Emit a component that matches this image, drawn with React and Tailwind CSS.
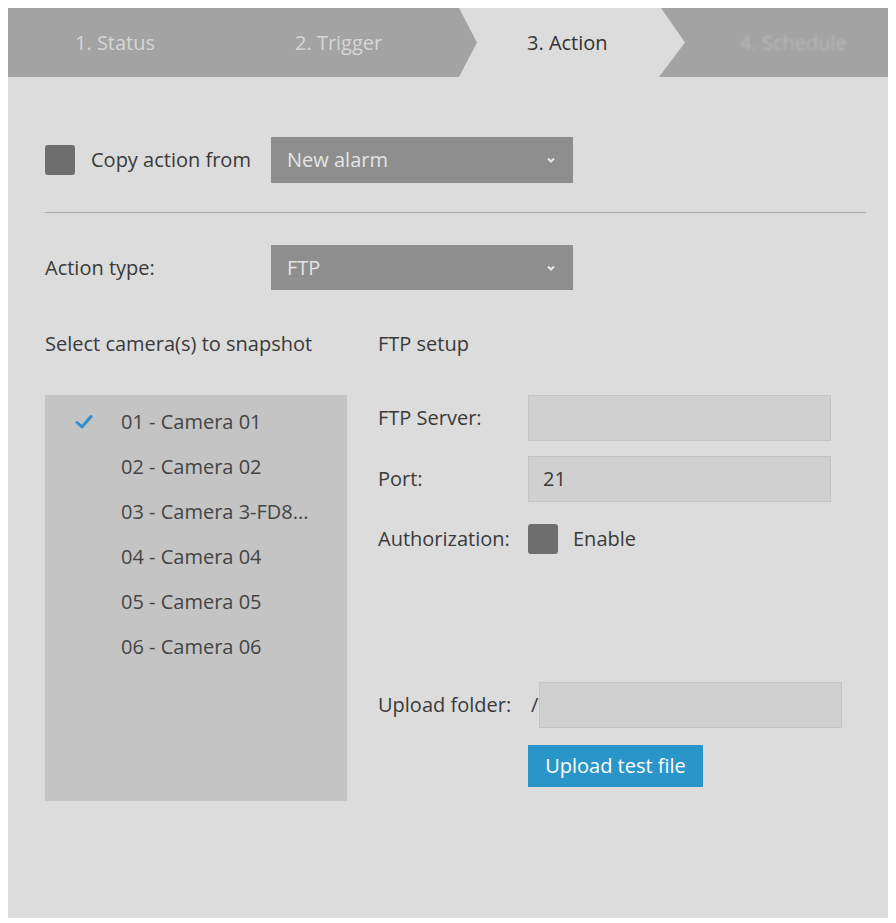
export default function App() {
  const cams = ["01 - Camera 01","02 - Camera 02","03 - Camera 3-FD8...","04 - Camera 04","05 - Camera 05","06 - Camera 06"];
  const Chev = () => (
    <svg width="12" height="12" viewBox="0 0 12 12"><path d="M3 4.5 L6 7.5 L9 4.5" fill="none" stroke="#e8e8e8" strokeWidth="2"/></svg>
  );
  return (
    <div className="w-[896px] h-[923px] bg-white pl-[8px] pr-[8px] pt-[8px]" style={{fontFamily:'"Open Sans", sans-serif'}}>
      <div className="w-[880px] h-[910px] bg-[#dcdcdc] text-[#3a3a3a] text-[20px]">
        <div className="relative h-[69px] bg-[#a3a3a3]">
          <div className="absolute top-0 left-[451px] h-[69px] w-[234px] bg-[#dcdcdc] [clip-path:polygon(0_0,202px_0,226px_50%,200px_100%,0_100%,18px_50%)]"></div>
          <div className="relative flex h-full items-center">
            <div className="absolute left-[67px] text-[#d6d6d6]">1. Status</div>
            <div className="absolute left-[287px] text-[#d6d6d6]">2. Trigger</div>
            <div className="absolute left-[519px] text-[#333]">3. Action</div>
            <div className="absolute left-[732px] text-[#b8b8b8] blur-[1px]">4. Schedule</div>
          </div>
        </div>
        <div className="pl-[37px] pr-[14px]">
          <div className="flex items-center mt-[60px] h-[46px]">
            <div className="w-[30px] h-[30px] rounded-[3px] bg-[#6e6e6e]"></div>
            <span className="ml-[16px] w-[180px] whitespace-nowrap">Copy action from</span>
            <div className="w-[302px] h-[46px] bg-[#8e8e8e] flex items-center justify-between pl-[16px] pr-[16px] text-[#e4e4e4]">
              <span>New alarm</span><Chev/>
            </div>
          </div>
          <div className="mt-[29px] h-[1px] bg-[#a8a8a8] w-[821px]"></div>
          <div className="flex items-center mt-[32px] h-[45px]">
            <span className="w-[226px]">Action type:</span>
            <div className="w-[302px] h-[45px] bg-[#8e8e8e] flex items-center justify-between pl-[16px] pr-[16px] text-[#e4e4e4]">
              <span>FTP</span><Chev/>
            </div>
          </div>
          <div className="flex mt-[40px]">
            <div className="w-[333px] shrink-0">
              <div className="h-[28px] leading-[28px] whitespace-nowrap">Select camera(s) to snapshot</div>
              <div className="mt-[37px] w-[302px] h-[406px] bg-[#c4c4c4] pt-[4px]">
                {cams.map((c,i)=>(
                  <div key={c} className="flex items-center h-[45px] text-[#444]">
                    <div className="w-[76px] flex justify-center pl-[2px]">
                      {i===0 && <svg width="18" height="16" viewBox="0 0 18 16"><path d="M2 8.5 L7 13 L16 2.5" fill="none" stroke="#2f8fd0" strokeWidth="3" strokeLinecap="round" strokeLinejoin="round"/></svg>}
                    </div>
                    <span>{c}</span>
                  </div>
                ))}
              </div>
            </div>
            <div className="flex-1">
              <div className="h-[28px] leading-[28px]">FTP setup</div>
              <div className="mt-[37px] flex items-center h-[46px]">
                <span className="w-[150px]">FTP Server:</span>
                <div className="w-[303px] h-[46px] bg-[#d0d0d0] border border-[#c4c4c4]"></div>
              </div>
              <div className="mt-[15px] flex items-center h-[46px]">
                <span className="w-[150px]">Port:</span>
                <div className="w-[303px] h-[46px] bg-[#d0d0d0] border border-[#c4c4c4] flex items-center pl-[14px]">21</div>
              </div>
              <div className="mt-[22px] flex items-center h-[30px]">
                <span className="w-[150px]">Authorization:</span>
                <div className="w-[30px] h-[30px] rounded-[3px] bg-[#6e6e6e]"></div>
                <span className="ml-[15px]">Enable</span>
              </div>
              <div className="mt-[128px] flex items-center h-[46px]">
                <span className="w-[153px] whitespace-nowrap">Upload folder:</span>
                <span className="w-[8px]">/</span>
                <div className="w-[303px] h-[46px] bg-[#d0d0d0] border border-[#c4c4c4]"></div>
              </div>
              <div className="ml-[150px] mt-[17px] w-[175px] h-[42px] bg-[#2a95c8] text-white flex items-center justify-center">Upload test file</div>
            </div>
          </div>
        </div>
      </div>
    </div>
  );
}
